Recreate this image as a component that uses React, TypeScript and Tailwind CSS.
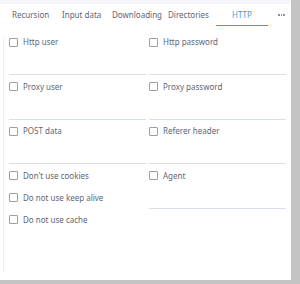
const font = { fontFamily: '"Noto Sans", "Open Sans", sans-serif' };

function Box() {
  return <span className="block h-[9px] w-[9px] shrink-0 rounded-[1px] border border-[#9aa0ab] bg-white" />;
}

function Check({ label }: { label: string }) {
  return (
    <div className="flex h-[10px] items-center gap-[5px]">
      <Box />
      <span className="text-[8px] leading-none text-[#5f6673]">{label}</span>
    </div>
  );
}

function Field({ label }: { label: string }) {
  return (
    <div className="flex flex-col">
      <Check label={label} />
      <div className="mt-[27px] h-px bg-[#d9e0ec]" />
    </div>
  );
}

const tabs = ["Recursion", "Input data", "Downloading", "Directories"];

export default function App() {
  return (
    <div className="flex h-[284px] w-[300px] flex-col bg-[#c4c4c4]" style={font}>
      <div className="flex h-[280px]">
        <div className="flex w-[291px] flex-col bg-white">
          <div className="h-[4px] bg-[#f5f6f9]" />
          {/* tabs */}
          <div className="flex h-[22px] items-stretch pl-[12px] text-[8px] text-[#5f6673]">
            {tabs.map((t, i) => (
              <div key={t} className={`flex items-center ${i === 0 ? "w-[50px]" : i === 1 ? "w-[50px]" : i === 2 ? "w-[56px]" : "w-[48px]"}`}>
                {t}
              </div>
            ))}
            <div className="flex w-[52px] items-center justify-center border-b-[1.5px] border-[#3d9ce6] text-[#3d9ce6]">HTTP</div>
            <div className="flex items-center gap-[1px] pl-[10px]">
              <span className="h-[1.5px] w-[1.5px] bg-[#8a909b]" />
              <span className="h-[1.5px] w-[1.5px] bg-[#8a909b]" />
              <span className="h-[1.5px] w-[1.5px] bg-[#8a909b]" />
            </div>
          </div>
          <div className="flex flex-1">
            <div className="ml-[3px] mt-[12px] mb-[8px] w-px bg-[#edf1f7]" />
            <div className="flex-1 pl-[5px] pr-[5px] pt-[11px]">
              <div className="grid grid-cols-2 gap-x-[3px] gap-y-[6.5px]">
                <Field label="Http user" />
                <Field label="Http password" />
                <Field label="Proxy user" />
                <Field label="Proxy password" />
                <Field label="POST data" />
                <Field label="Referer header" />
                <div className="flex flex-col gap-[12px]">
                  <Check label="Don't use cookies" />
                  <Check label="Do not use keep alive" />
                  <Check label="Do not use cache" />
                </div>
                <Field label="Agent" />
              </div>
            </div>
          </div>
        </div>
      </div>
    </div>
  );
}
